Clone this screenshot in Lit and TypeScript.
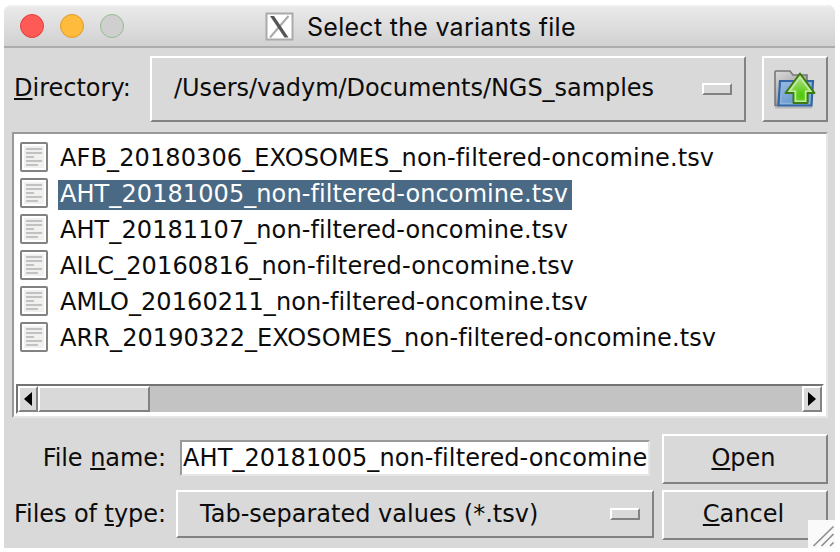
import { LitElement, html, css, svg } from "lit";
import { customElement, property } from "lit/decorators.js";

const files = [
  { name: "AFB_20180306_EXOSOMES_non-filtered-oncomine.tsv", width: 653, spacing: 0.115 },
  { name: "AHT_20181005_non-filtered-oncomine.tsv", width: 508, spacing: 0.08, selected: true },
  { name: "AHT_20181107_non-filtered-oncomine.tsv", width: 508, spacing: 0.08 },
  { name: "AILC_20160816_non-filtered-oncomine.tsv", width: 514, spacing: 0.12 },
  { name: "AMLO_20160211_non-filtered-oncomine.tsv", width: 528, spacing: 0.09 },
  { name: "ARR_20190322_EXOSOMES_non-filtered-oncomine.tsv", width: 655, spacing: 0.09 },
];

@customElement("tk-text")
class TkText extends LitElement {
  @property() before = "";
  @property() key = "";
  @property() after = "";
  static styles = css`
    :host { display: block; white-space: pre; line-height: 30px; }
    .key { text-decoration: underline; text-decoration-thickness: 2px; text-underline-offset: 2px; text-decoration-skip-ink: none; }
  `;
  render() {
    return html`${this.before}<span class="key">${this.key}</span>${this.after}`;
  }
}

@customElement("app-root")
class AppRoot extends LitElement {
  static styles = css`
    :host { display: block; width: 840px; height: 552px; background: #fff; overflow: hidden;
      font: 24px/30px "DejaVu Sans", sans-serif; color: #0c0c0c; }
    * { box-sizing: border-box; }
    svg { display: block; }
    .frame { padding: 5px 5px 4px 4px; height: 552px; }
    .window { position: relative; height: 543px; background: #d9d9d9; border-radius: 8px 8px 0 0; overflow: hidden; }
    .titlebar { height: 43px; display: flex; align-items: center; border-bottom: 2px solid #adadad;
      background: linear-gradient(#f4f4f4, #e9e9e9 3px, #d1d1d1); }
    .lights { display: flex; gap: 16px; margin-left: 16px; width: 245px; }
    .light { width: 24px; height: 24px; border-radius: 50%; border: 1.5px solid; }
    .close { background: #fe5b57; border-color: #e33e3b; }
    .minimise { background: #febb3c; border-color: #df9b2b; }
    .zoom { background: #cfcfcf; border-color: #93bd93; }
    .mark-x { margin-top: 2px; }
    .title { font: 25px/30px Inter, sans-serif; margin: 2px 0 0 13px; white-space: pre; letter-spacing: 0.28px; }
    .body { display: flex; flex-direction: column; padding: 8px 7px 0 8px; }
    .raised { border: 2px solid; border-color: #fff #828282 #828282 #fff; background: #d9d9d9; }
    .sunken { border: 2px solid; border-color: #999 #e6e6e6 #e6e6e6 #999; background: #fff; }
    .top { display: grid; grid-template-columns: 138px 596px 66px; column-gap: 0; height: 66px; }
    .top .up { margin-left: 16px; width: 66px; display: grid; place-items: center; }
    .label { padding-left: 2px; align-self: center; margin-top: -2px; }
    .menu { display: flex; align-items: center; justify-content: space-between; }
    .path { padding-left: 22px; margin-top: -2px; white-space: pre; letter-spacing: -0.05px; }
    .mark { width: 30px; height: 12px; margin-right: 12px; }
    .list { margin-top: 10px; width: 816px; height: 286px; padding: 6px 2px 2px 6px; display: flex; flex-direction: column; justify-content: space-between; }
    .row { display: flex; height: 36px; padding-top: 2px; gap: 10px; }
    .name { height: 30px; margin-top: 2px; padding: 0 2px; line-height: 29px; }
    .selected { background: #4a6984; color: #fff; }
    .scroll { display: flex; height: 30px; margin-left: -4px; background: #c3c3c3; border: 2px solid; border-color: #737373 #fff #fff #737373; justify-content: space-between; }
    .arrow { width: 20px; height: 26px; display: grid; place-items: center; }
    .start { display: flex; }
    .thumb { width: 112px; }
    .bottom { display: grid; grid-template-columns: 153px 497px 166px; grid-template-rows: 50px 50px; row-gap: 6px; margin-top: 16px; }
    .field { justify-self: end; letter-spacing: -0.06px; margin-right: -1px; }
    .entry { width: 470px; height: 36px; margin: 6px 0 0 15px; padding-left: 1px; white-space: pre; line-height: 33px; letter-spacing: 0.09px; }
    .type { width: 478px; height: 48px; margin-left: 11px; }
    .type .path { letter-spacing: 0; margin-top: 0; }
    .button { display: grid; place-items: center; width: 166px; padding-right: 3px; }
    .button tk-text { margin-top: -3px; }
    .grip { position: absolute; right: 0; bottom: 0; }
  `;

  render() {
    return html`<div class="frame"><div class="window">
      <div class="titlebar">
        <div class="lights"><i class="light close"></i><i class="light minimise"></i><i class="light zoom"></i></div>
        <svg class="mark-x" width="29" height="29" viewBox="0 0 29 29">
          <rect x="1.5" y="1.5" width="26" height="26" fill="#fff" stroke="#aaa" stroke-width="2"/>
          <path d="M23.5 4L5 25.5" stroke="#aaa" stroke-width="2"/>
          <path d="M5 4H9L23.5 25.5H19.5Z" fill="#555"/>
        </svg>
        <div class="title">Select the variants file</div>
      </div>
      <div class="body">
        <div class="top">
          <tk-text class="label" key="D" after="irectory:"></tk-text>
          <div class="menu raised"><span class="path">/Users/vadym/Documents/NGS_samples</span><i class="mark raised"></i></div>
          <div class="up raised">${this.folder()}</div>
        </div>
        <div class="list sunken">
          <div>${files.map((f) => html`<div class="row">${this.sheet()}<span class="name ${f.selected ? "selected" : ""}" style="width:${f.width + 6}px;letter-spacing:${f.spacing}px">${f.name}</span></div>`)}</div>
          <div class="scroll">
            <div class="start">
              <div class="arrow raised"><svg width="8" height="14"><path d="M8 0V14L0 7Z"/></svg></div>
              <div class="thumb raised"></div>
            </div>
            <div class="arrow raised"><svg width="8" height="14"><path d="M0 0V14L8 7Z"/></svg></div>
          </div>
        </div>
        <div class="bottom">
          <tk-text class="label field" before="File " key="n" after="ame:"></tk-text>
          <div class="entry sunken">AHT_20181005_non-filtered-oncomine</div>
          <div class="button raised"><tk-text key="O" after="pen"></tk-text></div>
          <tk-text class="label field" before="Files of " key="t" after="ype:"></tk-text>
          <div class="menu type raised"><span class="path">Tab-separated values (*.tsv)</span><i class="mark raised"></i></div>
          <div class="button raised"><tk-text key="C" after="ancel"></tk-text></div>
        </div>
      </div>
      <svg class="grip" width="27" height="28" viewBox="0 0 27 28">
        <rect width="27" height="28" fill="#fafafa"/>
        <path d="M5.5 26L25.5 6.5M13.5 26L25.5 14M22 26L25.5 22.5" stroke="#8d8d8d" stroke-width="1.6"/>
      </svg>
    </div></div>`;
  }

  sheet() {
    return svg`<svg width="28" height="30" viewBox="0 0 28 30">
      <rect x="1" y="1" width="26" height="28" rx="1" fill="#fff" stroke="#828282" stroke-width="2"/>
      <rect x="4" y="4" width="20" height="22" fill="#f0f0ef"/>
      <path d="M6 7H22M6 11H22M6 15H14M6 19H22M6 23H18" stroke="#c2c2c2" stroke-width="2"/>
    </svg>`;
  }

  folder() {
    return svg`<svg width="44" height="40" viewBox="0 0 44 40">
      <defs>
        <linearGradient id="g" x1="0" y1="0" x2="0.6" y2="1"><stop offset="0" stop-color="#ddd"/><stop offset="1" stop-color="#888"/></linearGradient>
        <linearGradient id="b" x1="0" y1="0" x2="1" y2="1"><stop offset="0" stop-color="#9dbde0"/><stop offset="1" stop-color="#4d87c7"/></linearGradient>
        <radialGradient id="a" cx=".55" cy=".75" r=".55"><stop offset="0" stop-color="#4bc800"/><stop offset="1" stop-color="#a3dc77"/></radialGradient>
      </defs>
      <path d="M2 38.5H39" stroke="#b5b5b5" stroke-width="2"/>
      <path d="M2 36.5V3Q2 2 3 2H17L20 6H34V14H8L5 36.5Z" fill="url(#g)" stroke="#777" stroke-width="1.6"/>
      <path d="M7 12H40L38.5 36.5H5.5Z" fill="url(#b)" stroke="#3465a4" stroke-width="2.2"/>
      <path d="M9 14.2H37.8L36.6 34.5H7.5Z" fill="none" stroke="#8fb3dc" stroke-width="1.4"/>
      <path d="M27 4.5L41.5 24H34.5V34H20.5V24H12.5Z" fill="url(#a)" stroke="#3d7b10" stroke-width="2" stroke-linejoin="round"/>
      <path d="M27 8L37.5 22.3H32.6V32.2H22.4V22.3H16.5Z" fill="none" stroke="#c3e9a3" stroke-width="1.6"/>
    </svg>`;
  }
}
